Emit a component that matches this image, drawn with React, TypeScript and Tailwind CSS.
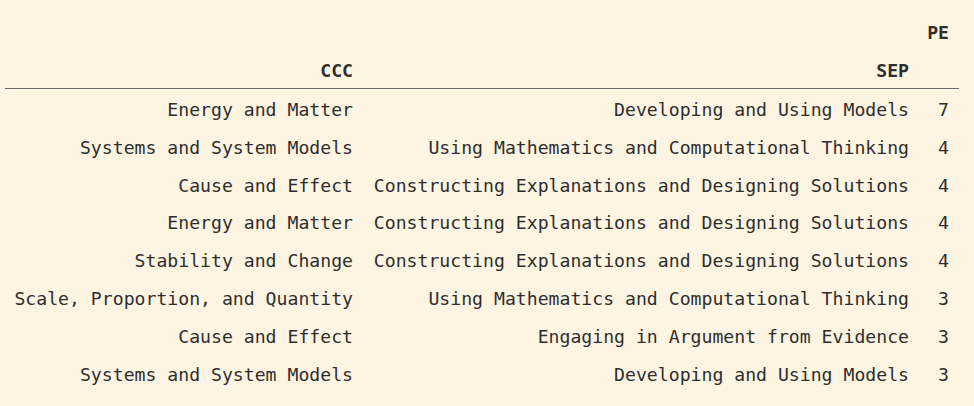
import React from "react";

const rows: [string, string, string][] = [
  ["Energy and Matter", "Developing and Using Models", "7"],
  ["Systems and System Models", "Using Mathematics and Computational Thinking", "4"],
  ["Cause and Effect", "Constructing Explanations and Designing Solutions", "4"],
  ["Energy and Matter", "Constructing Explanations and Designing Solutions", "4"],
  ["Stability and Change", "Constructing Explanations and Designing Solutions", "4"],
  ["Scale, Proportion, and Quantity", "Using Mathematics and Computational Thinking", "3"],
  ["Cause and Effect", "Engaging in Argument from Evidence", "3"],
  ["Systems and System Models", "Developing and Using Models", "3"],
];

export default function App() {
  return (
    <div
      className="w-[974px] h-[406px] bg-[#fdf5e2] text-[#2e2e2e] overflow-hidden"
      style={{ fontFamily: '"DejaVu Sans Mono", monospace' }}
    >
      <div className="ml-[5px] pt-[13px] w-[954px] text-[18.15px] leading-none">
        <div className="grid grid-cols-[358px_556px_40px] h-[38px] pt-[2px] items-center font-bold">
          <div />
          <div />
          <div className="text-right pr-[10px]">PE</div>
        </div>
        <div className="grid grid-cols-[358px_556px_40px] h-[38px] pt-[4px] items-center font-bold border-b border-[#6a6a6a]">
          <div className="text-right pr-[10px]">CCC</div>
          <div className="text-right pr-[10px]">SEP</div>
          <div />
        </div>
        {rows.map((r, i) => (
          <div key={i} className="grid grid-cols-[358px_556px_40px] h-[37.86px] pt-[4px] items-center">
            <div className="text-right pr-[10px] whitespace-nowrap">{r[0]}</div>
            <div className="text-right pr-[10px] whitespace-nowrap">{r[1]}</div>
            <div className="text-right pr-[10px]">{r[2]}</div>
          </div>
        ))}
      </div>
    </div>
  );
}
